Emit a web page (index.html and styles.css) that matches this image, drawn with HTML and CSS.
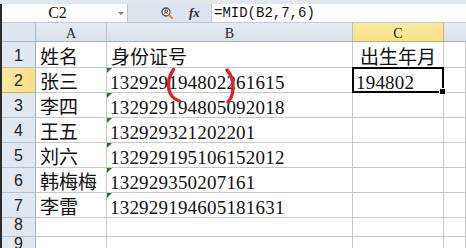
FILE: index.html
```html
<!DOCTYPE html>
<html>
<head>
<meta charset="utf-8">
<link rel="stylesheet" href="styles.css">
</head>
<body>
<div class="app">
  <div class="topstrip"></div>
  <div class="main">
    <div class="edge"></div>
    <div class="work">
      <div class="fbar">
        <div class="namebox"><span class="nametext">C2</span><span class="dd"></span></div>
        <div class="fxarea">
          <svg class="mag" width="13" height="13" viewBox="0 0 13 13">
            <circle cx="5" cy="5" r="4" fill="#fff" stroke="#4a4a4a" stroke-width="1.3"/>
            <path d="M4 7.2V3h1.6a1.1 1.1 0 0 1 0 2.2H4.2M5.3 5.2l1.3 2" fill="none" stroke="#333" stroke-width="0.9"/>
            <path d="M8.6 8.6l2.4 2.4" stroke="#e08a2e" stroke-width="2" stroke-linecap="round"/>
          </svg>
          <span class="fx">fx</span>
        </div>
        <div class="formula">=MID(B2,7,6)</div>
      </div>
      <div class="sheet">
        <div class="corner"></div>
        <div class="colh">A</div>
        <div class="colh">B</div>
        <div class="colh sel">C</div>
        <div class="colh last"></div>

        <div class="rowh">1</div>
        <div class="cell cjk">姓名</div>
        <div class="cell cjk">身份证号</div>
        <div class="cell cjk center">出生年月</div>
        <div class="cell"></div>

        <div class="rowh sel">2</div>
        <div class="cell cjk">张三</div>
        <div class="cell num txt">132929194802261615
          <svg class="marks" width="140" height="40" viewBox="0 0 140 40">
            <path d="M66.5 1.5C62 8 60.5 15 62 22C63 27 66.5 31 72.5 33" fill="none" stroke="#e3202c" stroke-width="3.4" stroke-linecap="round"/>
            <path d="M120 2C124.5 7 126.5 14 126 21C125.5 27 124 31 121 34" fill="none" stroke="#e3202c" stroke-width="3.4" stroke-linecap="round"/>
          </svg>
        </div>
        <div class="cell num active">194802<span class="handle"></span></div>
        <div class="cell"></div>

        <div class="rowh">3</div>
        <div class="cell cjk">李四</div>
        <div class="cell num txt">132929194805092018</div>
        <div class="cell"></div>
        <div class="cell"></div>

        <div class="rowh">4</div>
        <div class="cell cjk">王五</div>
        <div class="cell num txt">132929321202201</div>
        <div class="cell"></div>
        <div class="cell"></div>

        <div class="rowh">5</div>
        <div class="cell cjk">刘六</div>
        <div class="cell num txt">132929195106152012</div>
        <div class="cell"></div>
        <div class="cell"></div>

        <div class="rowh">6</div>
        <div class="cell cjk">韩梅梅</div>
        <div class="cell num txt">132929350207161</div>
        <div class="cell"></div>
        <div class="cell"></div>

        <div class="rowh">7</div>
        <div class="cell cjk">李雷</div>
        <div class="cell num txt">132929194605181631</div>
        <div class="cell"></div>
        <div class="cell"></div>

        <div class="rowh">8</div>
        <div class="cell"></div>
        <div class="cell"></div>
        <div class="cell"></div>
        <div class="cell"></div>

        <div class="rowh">9</div>
        <div class="cell"></div>
        <div class="cell"></div>
        <div class="cell"></div>
        <div class="cell"></div>
      </div>
    </div>
  </div>
</div>
</body>
</html>
```
FILE: styles.css
```css
html, body {
  margin: 0;
  padding: 0;
  background: #fff;
}
.app {
  width: 466px;
  height: 248px;
  overflow: hidden;
  display: flex;
  flex-direction: column;
}
.topstrip {
  height: 4px;
  flex: none;
  background: #e2e7ee;
}
.main {
  display: flex;
  flex: 1;
  min-height: 0;
}
.edge {
  width: 2px;
  flex: none;
  background: #2b2b2b;
}
.work {
  flex: 1;
  display: flex;
  flex-direction: column;
  min-width: 0;
}
.fbar {
  height: 18px;
  flex: none;
  display: flex;
  border-bottom: 1px solid #c2cad5;
}
.namebox {
  width: 126px;
  box-sizing: border-box;
  background: #fff;
  border-right: 1px solid #b9c4d2;
  display: flex;
  align-items: center;
  position: relative;
}
.nametext {
  width: 111px;
  text-align: center;
  font: 16px/18px "Liberation Serif", serif;
  color: #111;
}
.dd {
  width: 0;
  height: 0;
  margin-left: 5px;
  border-left: 3px solid transparent;
  border-right: 3px solid transparent;
  border-top: 3px solid #7a7a7a;
}
.fxarea {
  width: 84px;
  box-sizing: border-box;
  background: #dde4ed;
  border-right: 1px solid #c5cdd8;
  display: flex;
  align-items: center;
  padding-left: 33px;
}
.mag {
  display: block;
  margin-top: 1px;
}
.fx {
  margin-left: 15px;
  font: italic bold 13px/18px "Liberation Serif", serif;
  color: #2a2a2a;
}
.formula {
  flex: 1;
  background: #fff;
  padding-left: 2px;
  font: 14px/18px "Liberation Mono", monospace;
  color: #111;
  white-space: nowrap;
}
.sheet {
  display: grid;
  grid-template-columns: 34px 71px 246px 91px 1fr;
  grid-template-rows: 19px 26px repeat(6, 25px) 19px 19px;
}
.corner {
  background: #dfe5ed;
  border-right: 1px solid #a9b8cb;
  border-bottom: 1px solid #a9b8cb;
}
.colh {
  background: linear-gradient(#e6ebf2, #dae1eb);
  border-right: 1px solid #b3c0d0;
  border-bottom: 1px solid #a3b3c7;
  display: flex;
  align-items: flex-end;
  justify-content: center;
  font: 14px/15px "Liberation Serif", serif;
  color: #222;
}
.colh.sel {
  background: linear-gradient(#fbea9f, #f8e188);
  border-right-color: #c9ae5c;
  border-bottom-color: #c9ae5c;
}
.colh.last {
  border-right: none;
}
.rowh {
  background: #e2e8ef;
  border-right: 1px solid #9fb1c6;
  border-bottom: 1px solid #b6c3d3;
  display: flex;
  align-items: flex-end;
  justify-content: center;
  padding-bottom: 2px;
  font: 16px/18px "Liberation Sans Narrow", "Liberation Sans", sans-serif;
  color: #222;
}
.rowh.sel {
  background: linear-gradient(90deg, #fbe9a0, #f7df86);
  border-bottom-color: #c9ae5c;
}
.sheet > * {
  box-sizing: border-box;
  min-width: 0;
}
.cell {
  position: relative;
  border-right: 1px solid #c8c8c8;
  border-bottom: 1px solid #c8c8c8;
  display: flex;
  align-items: flex-end;
  padding-left: 3px;
  white-space: nowrap;
  color: #111;
}
.num {
  font: 19px/19px "Liberation Serif", serif;
  letter-spacing: 0.2px;
}
.cjk {
  font: 19px/19px "Noto Sans CJK SC", sans-serif;
  padding-left: 4px;
  padding-bottom: 2px;
}
.center {
  justify-content: center;
  padding-left: 0;
}
.txt::before {
  content: "";
  position: absolute;
  left: 0;
  top: 0;
  border-top: 5px solid #207a28;
  border-right: 5px solid transparent;
}
.marks {
  position: absolute;
  left: 0;
  top: 0;
  z-index: 5;
  overflow: visible;
}
.active::after {
  content: "";
  position: absolute;
  left: -1px;
  top: -1px;
  right: -1px;
  bottom: -1px;
  border: 2px solid #000;
}
.handle {
  position: absolute;
  right: -3px;
  bottom: -3px;
  width: 5px;
  height: 5px;
  background: #000;
  border: 1px solid #fff;
  z-index: 3;
}
```
